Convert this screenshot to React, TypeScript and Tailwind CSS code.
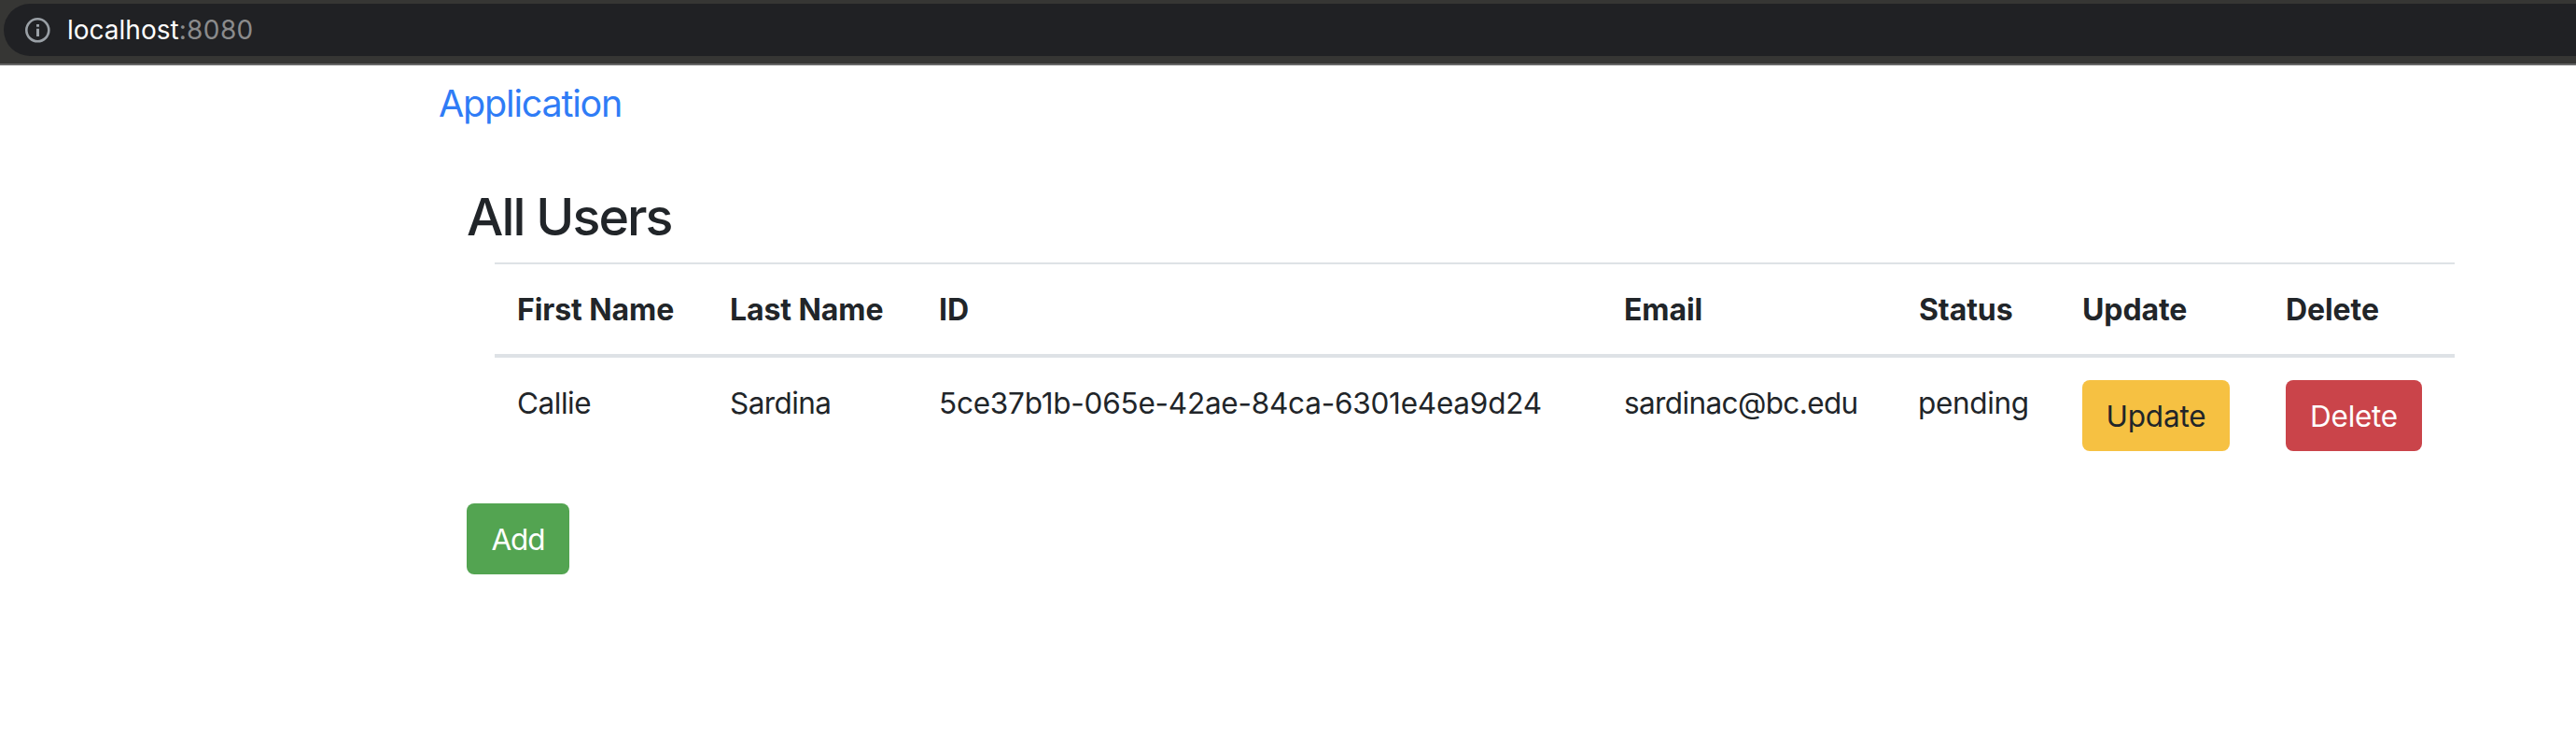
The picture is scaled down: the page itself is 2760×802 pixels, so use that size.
import type { ReactNode } from "react";

function InfoIcon() {
  return (
    <svg viewBox="0 0 28 28" className="h-7 w-7" fill="none">
      <circle cx="14.3" cy="14.3" r="12" stroke="#9aa0a6" strokeWidth="2.6" />
      <path d="M14.5 12.8V21M14.5 8v2.8" stroke="#9aa0a6" strokeWidth="3" />
    </svg>
  );
}

function AddressBar() {
  return (
    <header className="flex h-[70px] border-b-2 border-[#676767] bg-[#363634] pt-1 pl-1">
      <div className="flex h-14 grow items-center rounded-l-full bg-[#202124] pl-[22px] text-[28px]">
        <InfoIcon />
        <span className="pl-[18px] text-white">localhost</span>
        <span className="tracking-[0.4px] text-[#8b8b8c]">:8080</span>
      </div>
    </header>
  );
}

const variants = {
  warning: "bg-[#f6c142] text-[#212529]",
  danger: "bg-[#ca444a] text-white",
  success: "bg-[#53a451] text-white",
};

function Button({
  variant,
  className,
  children,
}: {
  variant: keyof typeof variants;
  className: string;
  children: ReactNode;
}) {
  return (
    <button
      className={`block h-[76px] rounded-[8px] pt-px text-center text-[31.5px] leading-[76px] ${variants[variant]} ${className}`}
    >
      {children}
    </button>
  );
}

const columns = [
  { title: "First Name", width: "w-[227px] pl-6" },
  { title: "Last Name", width: "w-[225px] pl-[25px]" },
  { title: "ID", width: "w-[733px] pl-6" },
  { title: "Email", width: "w-[316px] pl-[25px]" },
  { title: "Status", width: "w-[176px] pl-[25px]" },
  { title: "Update", width: "w-[218px] pl-6" },
  { title: "Delete", width: "w-[205px] pl-6" },
];

const users = [
  {
    first: "Callie",
    last: "Sardina",
    id: "5ce37b1b-065e-42ae-84ca-6301e4ea9d24",
    email: "sardinac@bc.edu",
    status: "pending",
  },
];

function UsersTable() {
  return (
    <table className="w-[2100px] table-fixed border-separate border-spacing-0 text-left text-[31.5px] leading-[48px]">
      <thead>
        <tr>
          {columns.map((c) => (
            <th
              key={c.title}
              className={`border-t-2 border-b-4 border-[#dee2e6] pt-[25px] pb-[23px] text-[32px] font-bold tracking-[-0.08px] whitespace-nowrap ${c.width}`}
            >
              {c.title}
            </th>
          ))}
        </tr>
      </thead>
      <tbody>
        {users.map((u) => (
          <tr key={u.id} className="align-top">
            <td className="pt-[25px] pl-6 tracking-[-0.46px]">{u.first}</td>
            <td className="pt-[25px] pl-[25px] tracking-[-0.58px]">{u.last}</td>
            <td className="pt-[25px] pl-6 tracking-[-0.23px] whitespace-nowrap">{u.id}</td>
            <td className="pt-[25px] pl-[25px] tracking-[-0.62px]">{u.email}</td>
            <td className="pt-[25px] pl-6 tracking-[-0.34px] whitespace-nowrap">{u.status}</td>
            <td className="py-6 pl-6">
              <Button variant="warning" className="w-[158px] tracking-[-0.18px]">
                Update
              </Button>
            </td>
            <td className="py-6 pl-6">
              <Button variant="danger" className="w-[146px] tracking-[-0.27px]">
                Delete
              </Button>
            </td>
          </tr>
        ))}
      </tbody>
    </table>
  );
}

export default function App() {
  return (
    <div className="h-[802px] w-[2760px] overflow-hidden bg-white font-['Inter',sans-serif] font-[430] text-[#212529]">
      <AddressBar />
      <nav className="flex h-[82px] items-center pl-[470px]">
        <a className="text-[39.5px] leading-[60px] tracking-[-1.2px] text-[#2f7cf6]">
          Application
        </a>
      </nav>
      <main className="pt-[46px] pl-[500px]">
        <h2 className="text-[55.5px] leading-[67px] font-medium tracking-[-1.95px]">All Users</h2>
        <div className="pt-[16px] pl-[30px]">
          <UsersTable />
        </div>
        <div className="pt-8">
          <Button variant="success" className="w-[110px] tracking-[-1.1px]">
            Add
          </Button>
        </div>
      </main>
    </div>
  );
}
